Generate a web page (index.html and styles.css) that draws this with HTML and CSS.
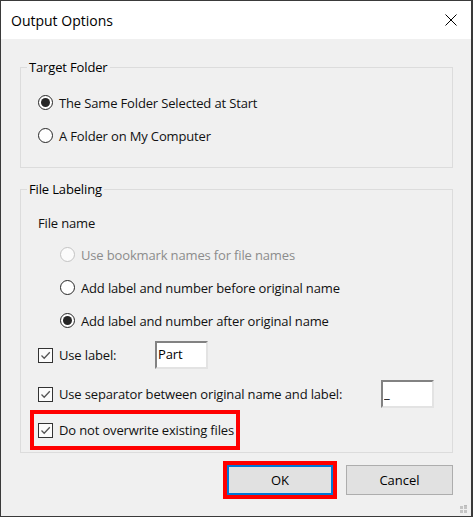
FILE: index.html
```html
<!DOCTYPE html>
<html>
<head>
<meta charset="utf-8">
<title>Output Options</title>
<link rel="stylesheet" href="styles.css">
</head>
<body>
<div class="window">
  <div class="titlebar">
    <span class="title">Output Options</span>
    <svg class="close" width="12" height="12" viewBox="0 0 12 12"><path d="M0.5 0.5 L11.5 11.5 M11.5 0.5 L0.5 11.5" stroke="#000" stroke-width="1" fill="none"/></svg>
  </div>
  <div class="content">
    <fieldset class="group group-target">
      <legend>Target Folder</legend>
      <div class="opt"><span class="radio checked"></span><span>The Same Folder Selected at Start</span></div>
      <div class="opt"><span class="radio"></span><span>A Folder on My Computer</span></div>
    </fieldset>
    <fieldset class="group group-label">
      <legend>File Labeling</legend>
      <div class="subhead">File name</div>
      <div class="indent">
        <div class="opt disabled"><span class="radio"></span><span>Use bookmark names for file names</span></div>
        <div class="opt"><span class="radio"></span><span>Add label and number before original name</span></div>
        <div class="opt"><span class="radio checked"></span><span>Add label and number after original name</span></div>
      </div>
      <div class="field-row field-row-first">
        <span class="check"><svg width="15" height="15" viewBox="0 0 15 15"><rect x="0.5" y="0.5" width="14" height="14" fill="#fcfcfc" stroke="#333"/><path d="M3.5 7.5 L6.2 10.2 L11.8 4.3" stroke="#555" stroke-width="1.3" fill="none"/></svg></span>
        <span class="lbl lbl-short">Use label:</span>
        <input class="text" type="text" value="Part">
      </div>
      <div class="field-row field-row-second">
        <span class="check"><svg width="15" height="15" viewBox="0 0 15 15"><rect x="0.5" y="0.5" width="14" height="14" fill="#fcfcfc" stroke="#333"/><path d="M3.5 7.5 L6.2 10.2 L11.8 4.3" stroke="#555" stroke-width="1.3" fill="none"/></svg></span>
        <span class="lbl lbl-long">Use separator between original name and label:</span>
        <input class="text" type="text" value="_">
      </div>
      <div class="highlight">
        <span class="check"><svg width="15" height="15" viewBox="0 0 15 15"><rect x="0.5" y="0.5" width="14" height="14" fill="#fcfcfc" stroke="#333"/><path d="M3.5 7.5 L6.2 10.2 L11.8 4.3" stroke="#555" stroke-width="1.3" fill="none"/></svg></span>
        <span>Do not overwrite existing files</span>
      </div>
    </fieldset>
    <div class="buttons">
      <div class="focus-mark"><button class="btn btn-default" type="button">OK</button></div>
      <button class="btn btn-cancel" type="button">Cancel</button>
    </div>
  </div>
  <svg class="grip" width="8" height="9" viewBox="0 0 8 9">
    <rect x="4" y="0" width="3" height="1" fill="#b9b9b9"/>
    <rect x="0" y="1" width="3" height="3" fill="#c4c4c4"/>
    <rect x="4" y="1" width="3" height="3" fill="#c4c4c4"/>
    <rect x="0" y="5" width="3" height="3" fill="#c4c4c4"/>
    <rect x="4" y="5" width="3" height="3" fill="#c4c4c4"/>
  </svg>
</div>
</body>
</html>
```
FILE: styles.css
```css
html, body {
  margin: 0;
  padding: 0;
}
body {
  font-family: "Open Sans", "Noto Sans", sans-serif;
  font-size: 13px;
  letter-spacing: -0.15px;
  color: #111;
  background: #f0f0f0;
}
.window {
  position: relative;
  width: 473px;
  height: 517px;
  box-sizing: border-box;
  border: 1px solid #3a3a3a;
  border-right-width: 2px;
  background: #f0f0f0;
}
.titlebar {
  height: 38px;
  background: #fff;
  display: flex;
  justify-content: space-between;
  align-items: flex-start;
}
.title {
  font-size: 14px;
  letter-spacing: 0;
  line-height: 36px;
  padding-top: 2px;
  padding-left: 10px;
  color: #000;
}
.close {
  margin-top: 13px;
  margin-right: 14px;
}
.content {
  padding: 19px 0 0 19px;
}
.group {
  width: 433px;
  box-sizing: border-box;
  margin: 0;
  min-width: 0;
  border: 1px solid #dcdcdc;
  padding: 0 17px;
}
.group legend {
  line-height: 18px;
  padding: 0 2px;
  margin-left: -11px;
  color: #000;
}
.group-target {
  padding-top: 10px;
  padding-bottom: 15px;
}
.group-label {
  margin-top: 12px;
  padding-top: 16px;
  padding-bottom: 2px;
}
.opt {
  display: flex;
  align-items: center;
  height: 33px;
  gap: 6px;
  white-space: nowrap;
}
.radio {
  width: 15px;
  height: 15px;
  box-sizing: border-box;
  border: 1px solid #262626;
  border-radius: 50%;
  background: #fff;
  display: flex;
  align-items: center;
  justify-content: center;
  flex: none;
}
.radio.checked::after {
  content: "";
  width: 9px;
  height: 9px;
  border-radius: 50%;
  background: #262626;
}
.disabled {
  color: #8c8c8c;
}
.disabled .radio {
  border-color: #c3c3c3;
  background: #fbfbfb;
}
.subhead {
  line-height: 18px;
}
.indent {
  margin-top: 6px;
  margin-left: 22px;
}
.field-row {
  display: flex;
  align-items: center;
  height: 28px;
  white-space: nowrap;
}
.field-row-first {
  margin-top: 4px;
}
.field-row-second {
  margin-top: 11px;
}
.check {
  width: 15px;
  height: 15px;
  flex: none;
  margin-right: 6px;
  display: block;
}
.check svg {
  display: block;
}
.lbl-short {
  width: 96px;
}
.lbl-long {
  width: 322px;
}
.text {
  width: 53px;
  height: 28px;
  box-sizing: border-box;
  margin: 0;
  padding: 0 0 3px 1px;
  border-style: solid;
  border-width: 2px;
  border-color: #828282 #e3e3e3 #e3e3e3 #828282;
  background: #fff;
  font-family: "Open Sans", "Noto Sans", sans-serif;
  font-size: 13px;
  letter-spacing: -0.15px;
  color: #000;
  outline: none;
}
.highlight {
  display: flex;
  align-items: center;
  width: fit-content;
  height: 40px;
  box-sizing: border-box;
  margin-top: 2px;
  margin-left: -8px;
  border: 4px solid #ff0000;
  padding: 0 2px 0 4px;
  white-space: nowrap;
}
.buttons {
  width: 433px;
  margin-top: 8px;
  display: flex;
  justify-content: flex-end;
  align-items: center;
  gap: 9px;
}
.focus-mark {
  border: 4px solid #ff0000;
  display: flex;
}
.btn {
  height: 30px;
  box-sizing: border-box;
  margin: 0;
  padding: 0;
  background: #e1e1e1;
  border: 1px solid #adadad;
  font-family: "Open Sans", "Noto Sans", sans-serif;
  font-size: 13px;
  color: #000;
}
.btn-default {
  width: 106px;
  border: 2px solid #0078d7;
}
.btn-cancel {
  width: 107px;
}
.grip {
  position: absolute;
  right: 3px;
  bottom: 2px;
}
```
